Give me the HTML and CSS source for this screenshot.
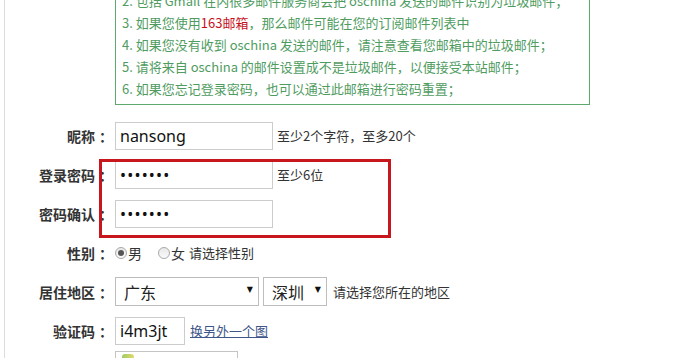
FILE: index.html
```html
<!DOCTYPE html>
<html lang="zh-CN">
<head>
    <meta charset="UTF-8">
    <title>注册</title>
    <link rel="stylesheet" href="styles.css">
</head>
<body>
    <div class="page">
        <div class="notice">
            <p>2. 包括 Gmail 在内很多邮件服务商会把 oschina 发送的邮件识别为垃圾邮件；</p>
            <p>3. 如果您使用<span class="red">163邮箱</span>，那么邮件可能在您的订阅邮件列表中</p>
            <p>4. 如果您没有收到 oschina 发送的邮件，请注意查看您邮箱中的垃圾邮件；</p>
            <p>5. 请将来自 oschina 的邮件设置成不是垃圾邮件，以便接受本站邮件；</p>
            <p>6. 如果您忘记登录密码，也可以通过此邮箱进行密码重置；</p>
        </div>

        <form class="reg-form">
            <div class="row">
                <label class="label">昵称<span class="colon">：</span></label>
                <input class="field" type="text" value="nansong">
                <span class="hint">至少2个字符，至多20个</span>
            </div>
            <div class="row">
                <label class="label">登录密码<span class="colon">：</span></label>
                <input class="field" type="password" value="1234567">
                <span class="hint">至少6位</span>
            </div>
            <div class="row">
                <label class="label">密码确认<span class="colon">：</span></label>
                <input class="field" type="password" value="1234567">
            </div>
            <div class="row">
                <label class="label">性别<span class="colon">：</span></label>
                <label class="choice"><input type="radio" name="sex" checked>男</label>
                <label class="choice"><input type="radio" name="sex">女</label>
                <span class="hint">请选择性别</span>
            </div>
            <div class="row">
                <label class="label">居住地区<span class="colon">：</span></label>
                <span class="select wide"><select><option>广东</option></select></span>
                <span class="select narrow"><select><option>深圳</option></select></span>
                <span class="hint area">请选择您所在的地区</span>
            </div>
            <div class="row">
                <label class="label">验证码<span class="colon">：</span></label>
                <input class="field code" type="text" value="i4m3jt">
                <a class="refresh" href="#">换另外一个图</a>
            </div>
            <div class="captcha">
                <span class="leaf"></span>
            </div>

            <!-- 标注框 -->
            <div class="mark"></div>
        </form>
    </div>
</body>
</html>
```

FILE: styles.css
```css
* {
    margin: 0;
    padding: 0;
    box-sizing: border-box;
}

body {
    font-family: "Noto Sans CJK SC", "Noto Sans", sans-serif;
    background: #fff;
    color: #333;
    overflow: hidden;
}

.page {
    margin-left: 4px;
    border-left: 1px solid #dcdcdc;
    min-height: 100vh;
}

.notice {
    margin: -15px 0 0 110px;
    width: 475px;
    border: 1px solid #5da86c;
    padding: 4px 6px;
    color: #4f9c5f;
    font-size: 13px;
    line-height: 22px;
}

.red {
    color: #c8101c;
}

.reg-form {
    position: relative;
    margin-top: 11px;
}

.row {
    display: flex;
    align-items: center;
    height: 39px;
}

.label {
    width: 104px;
    margin-right: 6px;
    text-align: right;
    font-size: 14px;
    font-weight: bold;
    color: #333;
}

.colon {
    margin-left: 4px;
    margin-right: -4px;
}

.field {
    width: 158px;
    height: 28px;
    border: 1px solid #cccccc;
    padding: 0 4px;
    font-family: "Noto Sans", sans-serif;
    font-size: 16px;
    color: #111;
    outline: none;
}

.field[type="password"] {
    letter-spacing: 1.2px;
}

.field.code {
    width: 70px;
}

.hint {
    margin-left: 4px;
    font-size: 13px;
    color: #333;
}

.hint.area {
    margin-left: 6px;
}

.choice {
    display: flex;
    align-items: center;
    font-size: 14px;
    color: #333;
    margin-right: 16px;
}

.choice:last-of-type {
    margin-right: 0;
}

.choice input {
    appearance: none;
    width: 12px;
    height: 12px;
    margin-right: 1px;
    border: 1px solid #a9a9a9;
    border-radius: 50%;
    background: linear-gradient(#e8e8e8, #fafafa);
    position: relative;
}

.choice input:checked::after {
    content: "";
    position: absolute;
    left: 2px;
    top: 2px;
    width: 6px;
    height: 6px;
    border-radius: 50%;
    background: #555;
}

.select {
    position: relative;
    display: inline-block;
    height: 29px;
    margin-right: 4px;
}

.select.wide {
    width: 144px;
}

.select.narrow {
    width: 64px;
    margin-right: 0;
}

.select select {
    appearance: none;
    width: 100%;
    height: 100%;
    border: 1px solid #bdbdbd;
    background: #fff;
    padding-left: 8px;
    font-family: "Noto Sans CJK SC", sans-serif;
    font-size: 16px;
    color: #222;
    outline: none;
}

.select::after {
    content: "▼";
    position: absolute;
    right: 6px;
    top: 8px;
    font-family: "DejaVu Sans", sans-serif;
    font-size: 8px;
    color: #111;
    pointer-events: none;
}

.refresh {
    margin-left: 5px;
    font-size: 13px;
    color: #3e5689;
}

.captcha {
    margin: 1px 0 0 110px;
    width: 123px;
    height: 30px;
    border: 1px solid #c4c4c4;
    padding: 2px 6px;
}

.leaf {
    display: block;
    width: 12px;
    height: 5px;
    background: linear-gradient(90deg, #9ccc65, #e5d96a);
    border-radius: 3px 3px 0 0;
}

.mark {
    position: absolute;
    left: 94px;
    top: 43px;
    width: 292px;
    height: 79px;
    border: 3px solid #c8161d;
}
```
